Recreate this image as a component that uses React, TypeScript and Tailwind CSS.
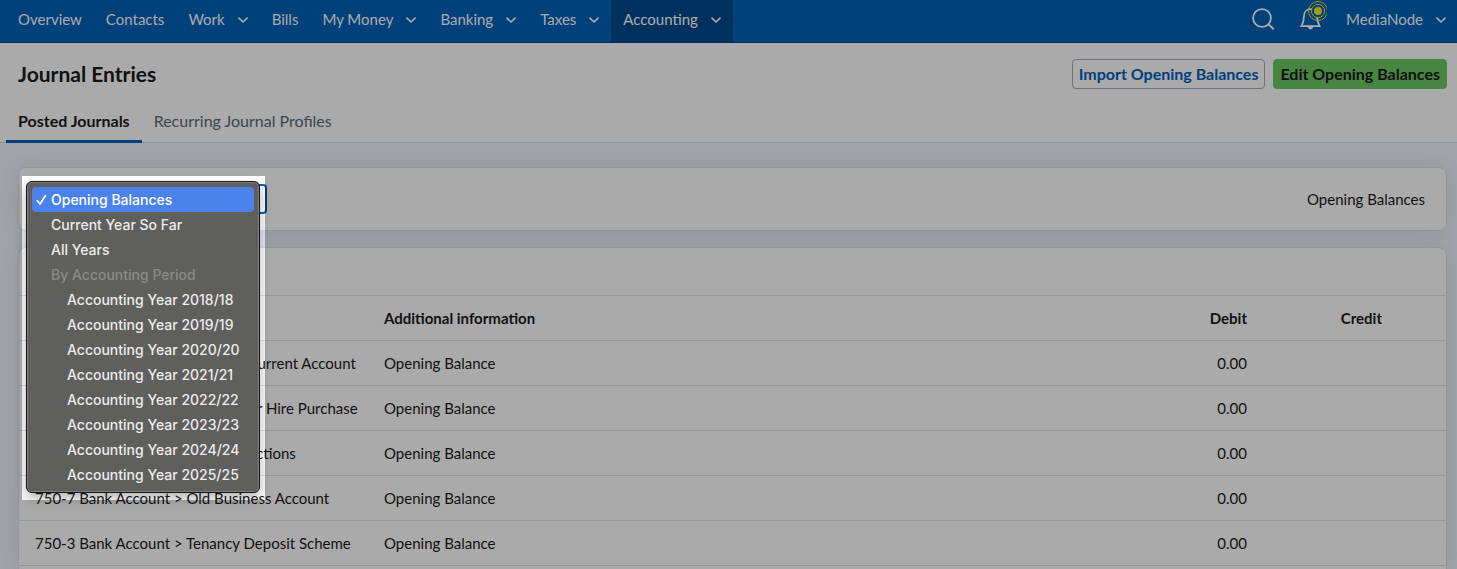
import { ReactNode, useState } from "react";

function Chevron() {
  return (
    <svg className="h-3 w-2.5 shrink-0" viewBox="0 0 10 12" fill="none" stroke="currentColor" strokeWidth="1.7" strokeLinecap="round" strokeLinejoin="round" aria-hidden="true">
      <path d="M1 5.2 L5 9 L9 5.2" />
    </svg>
  );
}

function NavItem({ label, menu = false, active = false }: { label: string; menu?: boolean; active?: boolean }) {
  return (
    <a
      href="#"
      aria-current={active ? "page" : undefined}
      className={`flex items-center gap-[13px] px-3 pb-1 ${active ? "bg-[#00488e]" : ""}`}
    >
      {label}
      {menu && <Chevron />}
    </a>
  );
}

function SearchIcon() {
  return (
    <svg className="h-6 w-6" viewBox="0 0 24 24" fill="none" stroke="currentColor" strokeWidth="1.8" aria-hidden="true">
      <circle cx="11" cy="11" r="8.9" />
      <path d="M17.4 17.2 L22.8 22.4" strokeWidth="2" />
    </svg>
  );
}

function BellIcon() {
  return (
    <svg className="h-8 w-8" viewBox="0 0 32 32" fill="none" aria-hidden="true">
      <path d="M15.5 9.2 C11.4 9.2 8.9 12.2 8.9 16.4 C8.9 20.8 8 23.2 6.4 26.1 H24.6 C23 23.2 22.1 20.8 22.1 16.4 C22.1 12.2 19.6 9.2 15.5 9.2 Z" stroke="currentColor" strokeWidth="1.8" />
      <path d="M12.6 27 H18.4 C17.6 28.6 16.6 29.5 15.5 29.5 C14.4 29.5 13.4 28.6 12.6 27 Z" fill="currentColor" />
      <circle cx="23" cy="11" r="9.5" stroke="#ffe81a" strokeWidth="1" />
      <circle cx="23" cy="11" r="6.6" fill="#0060b9" stroke="#ffe81a" strokeWidth="1" />
      <circle cx="23" cy="11" r="4" fill="#ffe81a" />
    </svg>
  );
}

const years = ["2018/18", "2019/19", "2020/20", "2021/21", "2022/22", "2023/23", "2024/24", "2025/25"];

const rows = [
  "750-1 Bank Account > Business Current Account",
  "792-1 Hire Purchase > Second Car Hire Purchase",
  "750-2 Bank Account > Old Transactions",
  "750-7 Bank Account > Old Business Account",
  "750-3 Bank Account > Tenancy Deposit Scheme",
];

function Option({ children, selected, nested, onPick }: { children: ReactNode; selected: boolean; nested?: boolean; onPick: () => void }) {
  return (
    <button
      type="button"
      role="option"
      aria-selected={selected}
      onClick={onPick}
      className={`flex h-[25px] w-full items-center rounded text-left ${selected ? "bg-[#4a82ea] text-white" : ""}`}
    >
      <span className={`flex shrink-0 justify-center ${nested ? "w-[35px]" : "w-[19px]"}`}>
        {selected && (
          <svg className="h-3 w-3" viewBox="0 0 12 12" fill="none" stroke="currentColor" strokeWidth="1.8" strokeLinecap="round" strokeLinejoin="round" aria-hidden="true">
            <path d="M1.4 6.8 L4 10 L9.4 1.8" />
          </svg>
        )}
      </span>
      {children}
    </button>
  );
}

function PeriodPicker() {
  const [value, setValue] = useState("Opening Balances");
  const plain = ["Opening Balances", "Current Year So Far", "All Years"];
  return (
    <div className="relative h-[30px] w-[232px]">
      <select
        aria-label="Accounting period"
        value={value}
        onChange={(e) => setValue(e.target.value)}
        className="h-full w-full appearance-none rounded border-2 border-[#0061bd] bg-white px-2"
      >
        {plain.map((p) => (
          <option key={p}>{p}</option>
        ))}
        <optgroup label="By Accounting Period">
          {years.map((y) => (
            <option key={y}>{`Accounting Year ${y}`}</option>
          ))}
        </optgroup>
      </select>
      {/* Dims everything on the page except the open menu */}
      <div className="pointer-events-none absolute -top-2 -left-[13px] z-10 h-[324px] w-[243px] shadow-[0_0_0_9999px_rgba(0,0,0,0.333)]" />
      <div
        role="listbox"
        aria-label="Accounting period"
        className="absolute -top-[3px] -left-[9px] z-20 w-[234px] rounded-md border border-[#161616] bg-[#5f5f5d] px-[5px] py-[5px] font-[Inter,sans-serif] text-[14px] font-medium text-[#ececec] shadow-[inset_0_0_0_1px_#7d7d7d,0_5px_12px_rgba(0,0,0,0.3)]"
      >
        {plain.map((p) => (
          <Option key={p} selected={value === p} onPick={() => setValue(p)}>
            {p}
          </Option>
        ))}
        <div className="flex h-[25px] items-center pl-[19px] text-[#8a8a89]">By Accounting Period</div>
        {years.map((y) => {
          const name = `Accounting Year ${y}`;
          return (
            <Option key={y} nested selected={value === name} onPick={() => setValue(name)}>
              {name}
            </Option>
          );
        })}
      </div>
    </div>
  );
}

export default function App() {
  return (
    <div className="relative flex min-h-screen flex-col overflow-hidden bg-[#f1f6fd] font-[Lato,sans-serif] text-[15px] leading-5 text-[#1a1a1a]">
      <nav className="flex h-[43px] justify-between border-b border-[#00498c] bg-[#0060b9] pr-[11px] pl-1.5 text-white">
        <div className="flex">
          <NavItem label="Overview" />
          <NavItem label="Contacts" />
          <NavItem label="Work" menu />
          <NavItem label="Bills" />
          <NavItem label="My Money" menu />
          <NavItem label="Banking" menu />
          <NavItem label="Taxes" menu />
          <NavItem label="Accounting" menu active />
        </div>
        <div className="flex items-center pb-1">
          <button type="button" aria-label="Search" className="mr-5">
            <SearchIcon />
          </button>
          <button type="button" aria-label="Notifications" className="mr-[19px] pb-1.5">
            <BellIcon />
          </button>
          <button type="button" className="flex items-center gap-[13px]">
            MediaNode
            <Chevron />
          </button>
        </div>
      </nav>

      <header className="border-b border-[#d9e0e6] bg-white text-[16px]">
        <div className="flex items-center justify-between pt-4 pr-2.5 pl-[18px]">
          <h1 className="text-[21px] leading-7 font-bold">Journal Entries</h1>
          <div className="flex gap-2">
            <button type="button" className="h-[30px] rounded border border-[#a3adb8] px-1.5 font-bold text-[#0061bd]">
              Import Opening Balances
            </button>
            <button type="button" className="h-[30px] rounded border border-[#6cc664] bg-[#6cc664] px-1.5 font-bold">
              Edit Opening Balances
            </button>
          </div>
        </div>
        <div className="-mb-px flex pt-3 pl-1.5">
          <a href="#" aria-current="page" className="border-b-[3px] border-[#0061bd] px-3 pt-2.5 pb-[9px] font-bold">
            Posted Journals
          </a>
          <a href="#" className="border-b-[3px] border-transparent px-3 pt-2.5 pb-[9px] text-[#5c6b77]">
            Recurring Journal Profiles
          </a>
        </div>
      </header>

      <main className="flex flex-1 flex-col gap-4 pt-6 pr-2.5 pl-[18px]">
        <section className="flex items-center justify-between rounded-lg border border-[#dde1e7] bg-white py-4 pr-[21px] pl-4 shadow-[0_2px_24px_rgba(60,80,130,0.12)]">
          <PeriodPicker />
          <span>Opening Balances</span>
        </section>

        <section className="flex-1 rounded-t-lg border border-b-0 border-[#dde1e7] bg-white shadow-[0_2px_24px_rgba(60,80,130,0.12)]">
          <div className="h-[47px]" />
          <table className="w-full table-fixed border-collapse">
            <thead>
              <tr className="h-[45px] border-y border-[#dde1e7]">
                <th className="w-[357px] pl-4 text-left font-bold">Account</th>
                <th className="pl-2 text-left font-bold">Additional information</th>
                <th className="w-[135px] text-right font-bold">Debit</th>
                <th className="w-[199px] pr-16 text-right font-bold">Credit</th>
              </tr>
            </thead>
            <tbody>
              {rows.map((name) => (
                <tr key={name} className="h-[45px] border-b border-[#dde1e7]">
                  <td className="pl-4 whitespace-nowrap">{name}</td>
                  <td className="pl-2">Opening Balance</td>
                  <td className="text-right">0.00</td>
                  <td />
                </tr>
              ))}
            </tbody>
          </table>
        </section>
      </main>
    </div>
  );
}
